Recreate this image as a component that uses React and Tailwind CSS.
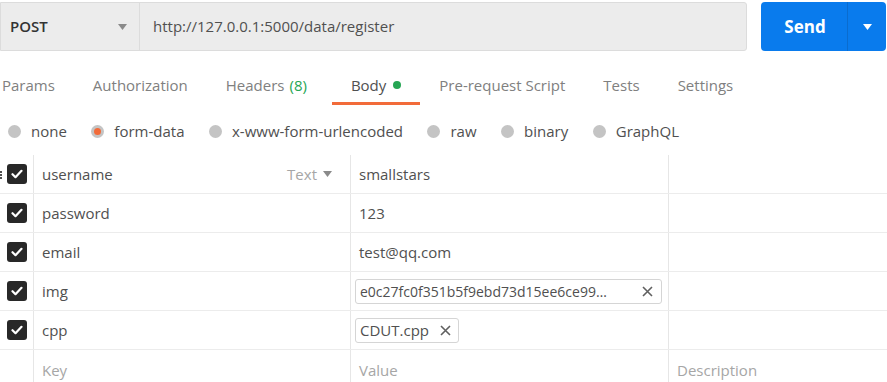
import React from 'react';

const tabs = [
  { label: 'Params' },
  { label: 'Authorization' },
  { label: 'Headers', count: '(8)' },
  { label: 'Body', active: true, dot: true },
  { label: 'Pre-request Script' },
  { label: 'Tests' },
  { label: 'Settings' },
];

const bodyTypes = [
  { label: 'none' },
  { label: 'form-data', checked: true },
  { label: 'x-www-form-urlencoded' },
  { label: 'raw' },
  { label: 'binary' },
  { label: 'GraphQL' },
];

const rows = [
  { key: 'username', value: 'smallstars', showType: true },
  { key: 'password', value: '123' },
  { key: 'email', value: 'test@qq.com' },
  { key: 'img', file: 'e0c27fc0f351b5f9ebd73d15ee6ce99…', wide: true },
  { key: 'cpp', file: 'CDUT.cpp' },
];

const Caret = ({ className }) => (
  <svg className={className} width="9" height="6" viewBox="0 0 9 6">
    <path d="M0 0h9L4.5 6z" fill="currentColor" />
  </svg>
);

const Check = () => (
  <div className="w-5 h-5 rounded-[3px] bg-[#282828] flex items-center justify-center">
    <svg width="12" height="10" viewBox="0 0 12 10">
      <path d="M1.5 5.2l3 3 6-6.4" fill="none" stroke="#fff" strokeWidth="2.2" strokeLinecap="round" strokeLinejoin="round" />
    </svg>
  </div>
);

const Cross = () => (
  <svg width="11" height="11" viewBox="0 0 11 11">
    <path d="M1 1l9 9M10 1l-9 9" stroke="#606060" strokeWidth="1.6" />
  </svg>
);

const FileChip = ({ name, wide }) => (
  <div
    className={`h-[25px] flex items-center border border-[#d5d5d5] rounded-[3px] pl-[4px] ${
      wide ? 'w-[307px] justify-between pr-[8px]' : 'pr-[7px] gap-[11px]'
    }`}
  >
    <span className={`text-[#505050] whitespace-nowrap ${wide ? 'text-[14px]' : 'text-[15px]'}`}>{name}</span>
    <Cross />
  </div>
);

const App = () => {
  return (
    <div className="w-[887px] h-[382px] overflow-hidden bg-white font-['Open_Sans',sans-serif] pt-[2px]">
      {/* request bar */}
      <div className="flex h-[49px]">
        <div className="w-[747px] flex bg-[#ececec] border border-[#dcdcdc] rounded-r-[3px]">
          <div className="w-[139px] flex items-center justify-between pl-[9px] pr-[12px] border-r border-[#dcdcdc]">
            <span className="text-[15px] font-semibold text-[#333]">POST</span>
            <Caret className="text-[#8a8a8a]" />
          </div>
          <div className="flex items-center pl-[13px] text-[15px] text-[#505050]">
            http://127.0.0.1:5000/data/register
          </div>
        </div>
        <div className="ml-[14px] w-[125px] flex bg-[#097bed] rounded-[4px] text-white">
          <div className="w-[86px] flex items-center justify-center text-[17px] font-bold pl-[2px]">Send</div>
          <div className="flex-1 flex items-center justify-center border-l border-[#0a6ccf]">
            <Caret className="text-white" />
          </div>
        </div>
      </div>

      {/* tabs */}
      <div className="flex mt-[19px] -ml-[17px]">
        {tabs.map((t) => (
          <div
            key={t.label}
            className={`h-[35px] px-[19px] flex items-center pb-[2px] border-b-[3px] ${
              t.active ? 'border-[#f26b3a] text-[#505050]' : 'border-transparent text-[#808080]'
            }`}
          >
            <span className="text-[15px] whitespace-nowrap">{t.label}</span>
            {t.count && <span className="text-[15px] text-[#26a654] ml-[5px] mr-[6px]">{t.count}</span>}
            {t.dot && <span className="w-[8px] h-[8px] rounded-full bg-[#26a654] ml-[7px]" />}
          </div>
        ))}
      </div>

      {/* body type radios */}
      <div className="flex h-[24px] mt-[14px] pl-[8px] gap-[24.5px] items-center">
        {bodyTypes.map((b) => (
          <div key={b.label} className="flex items-center gap-[10px]">
            <span className="w-[13px] h-[13px] rounded-full bg-[#c4c4c4] flex items-center justify-center">
              {b.checked && <span className="w-[7px] h-[7px] rounded-full bg-[#f26b3a]" />}
            </span>
            <span className="text-[15px] text-[#505050]">{b.label}</span>
          </div>
        ))}
      </div>

      {/* form-data table */}
      <div className="mt-[12px]">
        {rows.map((r, i) => (
          <div key={r.key} className="grid grid-cols-[34px_317px_318px_1fr] h-[39px] border-b border-[#ececec]">
            <div className="relative flex items-center pl-[7px] border-r border-[#e6e6e6]">
              {i === 0 && (
                <div className="absolute left-0 top-[16px] flex flex-col gap-[1px]">
                  <span className="w-[2px] h-[2px] bg-[#505050]" />
                  <span className="w-[2px] h-[2px] bg-[#505050]" />
                  <span className="w-[2px] h-[2px] bg-[#505050]" />
                </div>
              )}
              <Check />
            </div>
            <div className="flex items-center justify-between pl-[8px] pr-[18px] border-r border-[#e6e6e6]">
              <span className="text-[15px] text-[#505050]">{r.key}</span>
              {r.showType && (
                <span className="flex items-center gap-[6px] text-[15px] text-[#a6a6a6]">
                  Text
                  <Caret className="text-[#8a8a8a]" />
                </span>
              )}
            </div>
            <div className="flex items-center pl-[4px] border-r border-[#e6e6e6]">
              {r.file ? (
                <FileChip name={r.file} wide={r.wide} />
              ) : (
                <span className="pl-[4px] text-[15px] text-[#505050]">{r.value}</span>
              )}
            </div>
            <div />
          </div>
        ))}
        <div className="grid grid-cols-[34px_317px_318px_1fr] h-[40px] text-[15px] text-[#a6a6a6]">
          <div className="border-r border-[#e6e6e6]" />
          <div className="flex items-center pl-[8px] border-r border-[#e6e6e6]">Key</div>
          <div className="flex items-center pl-[8px] border-r border-[#e6e6e6]">Value</div>
          <div className="flex items-center pl-[8px]">Description</div>
        </div>
      </div>
    </div>
  );
};

export default App;
